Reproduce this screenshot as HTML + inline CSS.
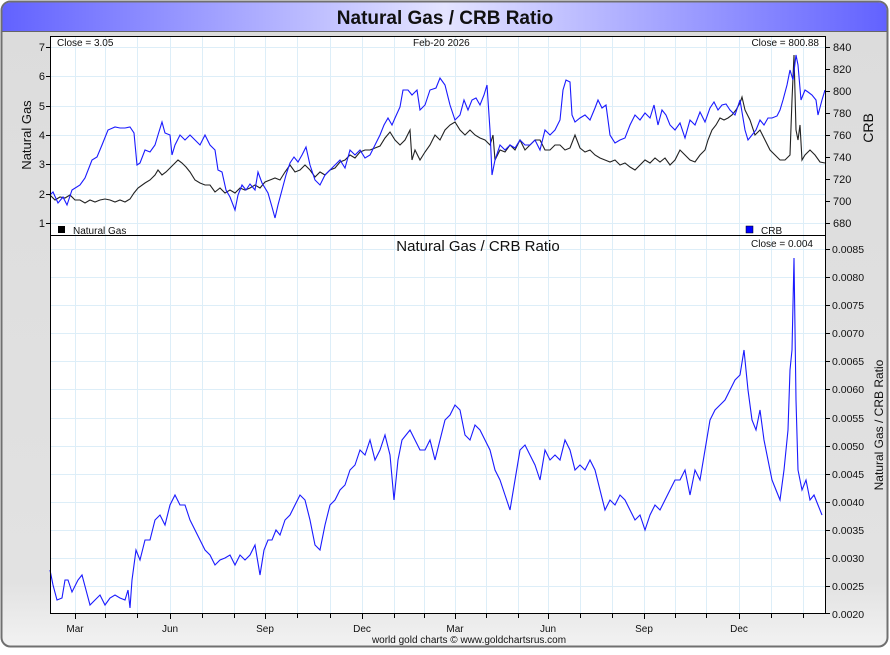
<!DOCTYPE html>
<html><head><style>
body{margin:0;width:890px;height:650px;overflow:hidden;background:#fff;font-family:"Liberation Sans",sans-serif}
</style></head><body>
<svg width="890" height="650" xmlns="http://www.w3.org/2000/svg" font-family="Liberation Sans, sans-serif">
<defs>
<linearGradient id="tb" x1="0" x2="1" y1="0" y2="0">
<stop offset="0" stop-color="#6262ff"/><stop offset="0.5" stop-color="#e4e4ff"/><stop offset="1" stop-color="#6262ff"/>
</linearGradient>
<linearGradient id="bg" x1="0" x2="0" y1="0" y2="1">
<stop offset="0" stop-color="#dcdcdc"/><stop offset="0.9" stop-color="#e2e2e2"/><stop offset="1" stop-color="#f2f2f2"/>
</linearGradient>
</defs>
<rect x="1.5" y="1.5" width="886" height="645" rx="9" fill="url(#bg)" stroke="#707070" stroke-width="2"/>
<path d="M2.5 31 V11 Q2.5 2.5 11 2.5 H878 Q886.5 2.5 886.5 11 V31 Z" fill="url(#tb)"/>
<line x1="2" y1="31.5" x2="887" y2="31.5" stroke="#666"/>
<text x="445" y="24" text-anchor="middle" font-size="19" font-weight="bold" fill="#111">Natural Gas / CRB Ratio</text>
<rect x="50" y="36" width="776" height="578" fill="#fff"/>
<g stroke="#ddeef8" stroke-width="1">
<path d="M75.5 36V614M105.5 36V614M137.5 36V614M170.5 36V614M202.5 36V614M234.5 36V614M265.5 36V614M297.5 36V614M330.5 36V614M362.5 36V614M394.5 36V614M424.5 36V614M455.5 36V614M486.5 36V614M518.5 36V614M548.5 36V614M580.5 36V614M612.5 36V614M644.5 36V614M675.5 36V614M706.5 36V614M739.5 36V614M771.5 36V614M803.5 36V614"/>
<path d="M50 47.5H826M50 76.5H826M50 106.5H826M50 135.5H826M50 164.5H826M50 194.5H826M50 223.5H826"/>
<path d="M50 249.5H826M50 277.5H826M50 305.5H826M50 333.5H826M50 361.5H826M50 389.5H826M50 418.5H826M50 446.5H826M50 474.5H826M50 502.5H826M50 530.5H826M50 558.5H826M50 586.5H826"/>
</g>
<polyline fill="none" stroke="#222" stroke-width="1.1" points="50,195 55,200 60,197 65,198 70,195 75,200 80,200 85,203 90,200 95,202 100,200 105,199 110,200 115,202 120,200 125,202 130,199 134,193 138,188 145,183 150,180 155,175 158,170 162,175 166,172 170,168 175,163 178,160 182,163 186,167 190,172 195,180 200,183 205,185 210,185 215,192 220,188 225,193 230,190 235,193 240,188 245,190 250,188 255,185 260,188 265,182 270,180 275,178 280,180 285,172 290,165 295,172 300,170 305,165 310,170 315,177 320,172 325,175 330,170 335,168 340,162 345,160 350,155 355,158 360,152 365,150 370,150 375,148 380,146 385,138 390,132 395,140 400,145 405,140 410,130 412,160 415,150 420,160 425,152 430,145 435,135 440,140 445,130 450,125 455,122 460,130 465,135 470,130 475,135 480,138 485,140 490,145 493,135 495,160 500,150 505,152 510,145 515,150 520,140 525,150 530,145 535,140 540,140 545,150 550,150 555,145 560,145 565,150 570,148 575,135 580,148 585,152 590,150 595,155 600,158 605,160 610,162 615,160 620,165 625,163 630,167 635,170 640,165 645,160 650,163 655,158 660,162 665,158 670,165 675,160 680,150 685,155 690,160 695,162 700,155 705,150 708,140 712,130 716,125 720,118 724,120 728,118 732,115 736,110 740,103 742,97 745,110 750,120 755,135 760,130 765,140 770,150 775,155 780,160 785,160 790,155 792,100 794,55 796,130 798,140 800,125 802,160 805,155 810,150 815,155 820,162 825,163"/>
<polyline fill="none" stroke="#1a1aff" stroke-width="1.1" points="50,195 53,192 58,203 63,197 67,205 72,190 80,185 85,178 92,160 97,157 102,145 108,130 115,127 120,128 125,128 130,127 134,133 137,165 140,163 145,150 150,152 155,145 158,135 162,122 165,133 170,135 172,155 175,145 180,135 185,140 190,135 195,140 200,145 205,135 210,145 215,150 218,170 222,172 226,190 230,197 235,210 238,195 242,185 246,190 250,184 255,190 258,172 262,183 268,193 272,207 275,218 278,205 282,190 286,175 290,163 294,157 298,162 302,155 306,147 310,165 315,180 320,185 325,175 330,170 335,165 340,160 345,168 350,150 355,155 360,150 365,158 370,155 375,145 380,135 384,125 388,118 392,125 395,118 400,107 403,90 408,90 412,95 417,90 420,110 425,105 430,90 436,88 440,78 445,85 450,105 455,120 460,115 464,100 468,110 472,100 476,98 480,105 484,95 487,85 490,130 492,175 495,160 500,145 505,150 510,145 515,148 520,140 525,145 530,145 535,140 540,150 545,130 550,135 555,130 560,120 563,90 566,80 570,82 572,115 575,122 580,118 585,115 590,120 595,108 598,100 602,108 606,105 610,135 615,143 620,140 625,138 630,125 635,115 640,120 645,113 650,118 654,105 658,125 662,110 666,115 670,125 675,130 680,123 685,138 690,120 695,125 700,112 705,122 710,108 714,102 718,110 722,105 726,104 730,110 735,115 740,100 745,130 748,140 752,135 756,130 760,120 764,125 768,118 772,118 777,116 780,110 783,100 787,85 790,70 793,80 796,55 798,65 801,100 805,90 808,92 812,95 816,100 818,115 822,100 825,90"/>
<polyline fill="none" stroke="#1a1aff" stroke-width="1.1" points="50,570 53,585 57,600 62,598 65,580 68,580 72,592 78,580 82,575 86,590 90,605 95,600 100,595 105,605 110,598 115,595 120,598 125,600 128,590 130,608 132,580 136,550 140,560 145,540 150,540 155,520 160,515 165,525 170,505 175,495 180,505 185,505 190,520 195,530 200,540 205,550 210,555 215,565 220,560 225,558 230,555 235,565 240,555 245,560 250,555 255,545 260,575 264,550 268,540 272,540 276,530 280,535 285,520 290,515 295,505 300,495 305,500 310,520 315,545 320,550 325,525 330,505 335,500 340,490 345,485 350,470 355,465 360,450 365,455 370,440 375,460 380,450 385,435 390,455 394,500 398,460 402,440 406,435 410,430 415,440 420,450 425,450 430,440 435,460 440,440 445,420 450,415 455,405 460,410 465,435 470,440 475,425 480,430 485,440 490,450 495,470 500,480 505,495 510,510 515,480 520,450 525,445 530,455 535,465 540,480 545,450 550,460 555,455 560,460 565,440 570,450 575,470 580,465 585,470 590,460 595,470 600,490 605,510 610,500 615,505 620,495 625,500 630,510 635,520 640,515 645,530 650,515 655,505 660,510 665,500 670,490 675,480 680,480 685,470 690,495 695,470 700,480 705,450 710,420 715,410 720,405 725,400 730,390 735,380 740,375 744,350 748,390 752,420 756,430 760,410 764,440 768,460 772,480 776,490 780,500 784,470 788,430 790,370 792,350 794,258 796,400 798,470 802,490 806,480 810,500 814,495 818,505 822,515"/>
<rect x="50.5" y="36.5" width="775" height="577" fill="none" stroke="#000"/>
<line x1="50" y1="235.5" x2="826" y2="235.5" stroke="#000"/>
<g font-size="10" fill="#111">
<text x="57" y="46">Close = 3.05</text>
<text x="413" y="46">Feb-20  2026</text>
<text x="819" y="46" text-anchor="end">Close = 800.88</text>
<rect x="58" y="226" width="7" height="7" fill="#000"/><text x="73" y="234">Natural Gas</text>
<rect x="746" y="226" width="7" height="7" fill="#00f" stroke="#000" stroke-width="0.5"/><text x="761" y="234">CRB</text>
<text x="813" y="247" text-anchor="end">Close = 0.004</text>
</g>
<text x="478" y="251" text-anchor="middle" font-size="15" fill="#111">Natural Gas  /  CRB Ratio</text>
<g font-size="11" fill="#111" text-anchor="end">
<text x="45" y="51">7</text><text x="45" y="80">6</text><text x="45" y="110">5</text><text x="45" y="139">4</text><text x="45" y="168">3</text><text x="45" y="198">2</text><text x="45" y="227">1</text>
</g>
<g stroke="#000"><path d="M46 47.5H50M46 76.5H50M46 106.5H50M46 135.5H50M46 164.5H50M46 194.5H50M46 223.5H50"/>
<path d="M826 47.5H830M826 69.5H830M826 91.5H830M826 113.5H830M826 135.5H830M826 157.5H830M826 179.5H830M826 201.5H830M826 223.5H830"/>
<path d="M826 249.5H830M826 277.5H830M826 305.5H830M826 333.5H830M826 361.5H830M826 389.5H830M826 418.5H830M826 446.5H830M826 474.5H830M826 502.5H830M826 530.5H830M826 558.5H830M826 586.5H830M826 613.5H830"/>
<path d="M75.5 614V619M105.5 614V618M137.5 614V618M170.5 614V619M202.5 614V618M234.5 614V618M265.5 614V619M297.5 614V618M330.5 614V618M362.5 614V619M394.5 614V618M424.5 614V618M455.5 614V619M486.5 614V618M518.5 614V618M548.5 614V619M580.5 614V618M612.5 614V618M644.5 614V619M675.5 614V618M706.5 614V618M739.5 614V619M771.5 614V618M803.5 614V618"/></g>
<g font-size="11" fill="#111">
<text x="833" y="51">840</text><text x="833" y="73">820</text><text x="833" y="95">800</text><text x="833" y="117">780</text><text x="833" y="139">760</text><text x="833" y="161">740</text><text x="833" y="183">720</text><text x="833" y="205">700</text><text x="833" y="227">680</text>
</g>
<g font-size="10.5" fill="#111">
<text x="832" y="253">0.0085</text><text x="832" y="281">0.0080</text><text x="832" y="309">0.0075</text><text x="832" y="337">0.0070</text><text x="832" y="365">0.0065</text><text x="832" y="393">0.0060</text><text x="832" y="422">0.0055</text><text x="832" y="450">0.0050</text><text x="832" y="478">0.0045</text><text x="832" y="506">0.0040</text><text x="832" y="534">0.0035</text><text x="832" y="562">0.0030</text><text x="832" y="590">0.0025</text><text x="832" y="618">0.0020</text>
</g>
<text transform="translate(31,135) rotate(-90)" text-anchor="middle" font-size="13" fill="#111">Natural Gas</text>
<text transform="translate(873,128) rotate(-90)" text-anchor="middle" font-size="14" fill="#111">CRB</text>
<text transform="translate(883,425) rotate(-90)" text-anchor="middle" font-size="12" fill="#111">Natural Gas / CRB Ratio</text>
<g font-size="10" fill="#111" text-anchor="middle">
<text x="75" y="632">Mar</text><text x="170" y="632">Jun</text><text x="265" y="632">Sep</text><text x="362" y="632">Dec</text><text x="455" y="632">Mar</text><text x="548" y="632">Jun</text><text x="644" y="632">Sep</text><text x="739" y="632">Dec</text>
<text x="469" y="643">world gold charts © www.goldchartsrus.com</text>
</g>
</svg>
</body></html>
